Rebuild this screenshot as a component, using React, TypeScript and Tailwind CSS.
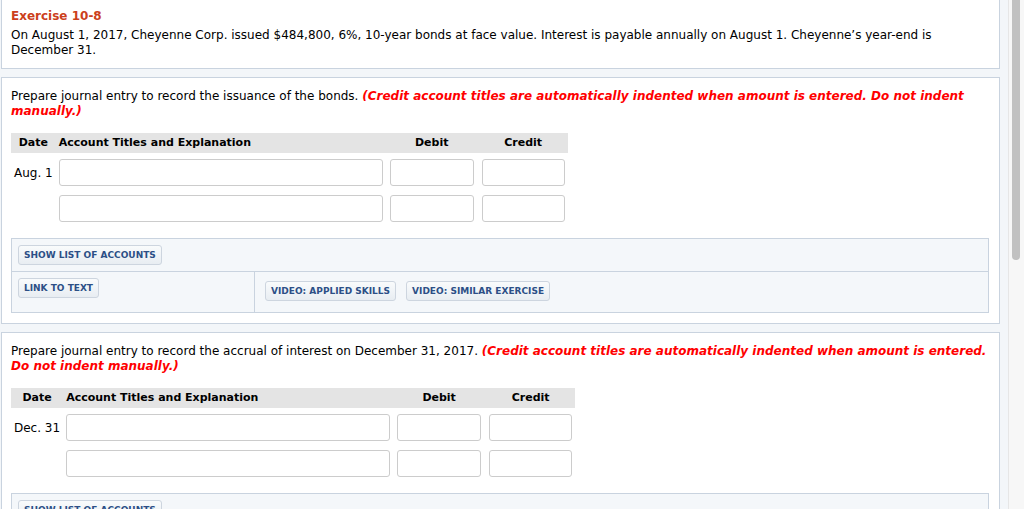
import React from "react";

const Btn = ({ label }: { label: string }) => (
  <button className="h-[20px] px-[5px] rounded-[3px] border border-[#cdd5df] bg-gradient-to-b from-[#f9fbfc] to-[#e8edf2] text-[9px] font-bold uppercase leading-none text-[#2c4f86] font-['DejaVu_Sans',Verdana,sans-serif]">
    {label}
  </button>
);

const Field = ({ w }: { w: string }) => (
  <div className={"h-[27px] rounded-[3px] border border-[#cccccc] bg-white " + w} />
);

function Journal({ date }: { date: string }) {
  const rows = [date, ""];
  return (
    <table className="border-collapse text-[12px] text-black">
      <thead>
        <tr className="h-[20px] bg-[#e4e4e4] text-[11px] font-bold">
          <th className="px-[3px] text-center">Date</th>
          <th className="pl-[3px] pr-[4px] text-left">Account Titles and Explanation</th>
          <th className="pl-[3px] pr-[4px] text-center">Debit</th>
          <th className="pl-[4px] pr-[3px] text-center">Credit</th>
        </tr>
      </thead>
      <tbody>
        {rows.map((d, i) => (
          <tr key={i}>
            <td className="whitespace-nowrap px-[3px] pt-[6px] pb-[3px] text-center align-middle">{d}</td>
            <td className="pl-[3px] pr-[4px] pt-[6px] pb-[3px]">
              <Field w="w-[324px]" />
            </td>
            <td className="pl-[3px] pr-[4px] pt-[6px] pb-[3px]">
              <Field w="w-[84px]" />
            </td>
            <td className="pl-[4px] pr-[3px] pt-[6px] pb-[3px]">
              <Field w="w-[83px]" />
            </td>
          </tr>
        ))}
      </tbody>
    </table>
  );
}

function Tools() {
  return (
    <div className="mt-[13px] border border-[#c9d3df] bg-[#f4f7fa]">
      <div className="flex h-[32px] items-start px-[6px] pt-[6px]">
        <Btn label="Show List of Accounts" />
      </div>
      <div className="flex h-[41px] border-t border-[#c9d3df]">
        <div className="flex w-[243px] items-start border-r border-[#c9d3df] px-[6px] pt-[6px]">
          <Btn label="Link to Text" />
        </div>
        <div className="flex items-start gap-[10px] px-[10px] pt-[9px]">
          <Btn label="Video: Applied Skills" />
          <Btn label="Video: Similar Exercise" />
        </div>
      </div>
    </div>
  );
}

function Part({ intro, date }: { intro: string; date: string }) {
  return (
    <section className="mt-[8px] border border-[#c9d3df] bg-white pl-[9px] pr-[10px] pt-[11px] pb-[10px]">
      <p className="text-[12px] leading-[15px] text-black">
        {intro}{" "}
        <span className="font-bold italic text-[#f00]">
          (Credit account titles are automatically indented when amount is entered. Do not indent manually.)
        </span>
      </p>
      <div className="mt-[14px]">
        <Journal date={date} />
      </div>
      <Tools />
    </section>
  );
}

export default function App() {
  return (
    <div className="flex h-[509px] w-[1024px] overflow-hidden bg-[#f3f6f9] font-['DejaVu_Sans',Verdana,sans-serif]">
      <main className="w-[1008px] pl-[1px] pr-[8px]">
        <section className="-mt-px border border-[#c9d3df] bg-white pl-[9px] pr-[10px] pt-[9px] pb-[10px]">
          <h1 className="text-[12px] font-bold leading-[15px] text-[#cc3f1c]">Exercise 10-8</h1>
          <p className="mt-[4px] text-[12px] leading-[15px] text-black">
            On August 1, 2017, Cheyenne Corp. issued $484,800, 6%, 10-year bonds at face value. Interest is
            payable annually on August 1. Cheyenne’s year-end is December 31.
          </p>
        </section>
        <Part intro="Prepare journal entry to record the issuance of the bonds." date="Aug. 1" />
        <Part intro="Prepare journal entry to record the accrual of interest on December 31, 2017." date="Dec. 31" />
      </main>
      <aside className="w-[16px] border-l border-[#e6e6e6] bg-[#f7f7f7] px-[3px]">
        <div className="h-[260px] w-[8px] rounded-b-[4px] bg-[#c1c1c1]" />
      </aside>
    </div>
  );
}
